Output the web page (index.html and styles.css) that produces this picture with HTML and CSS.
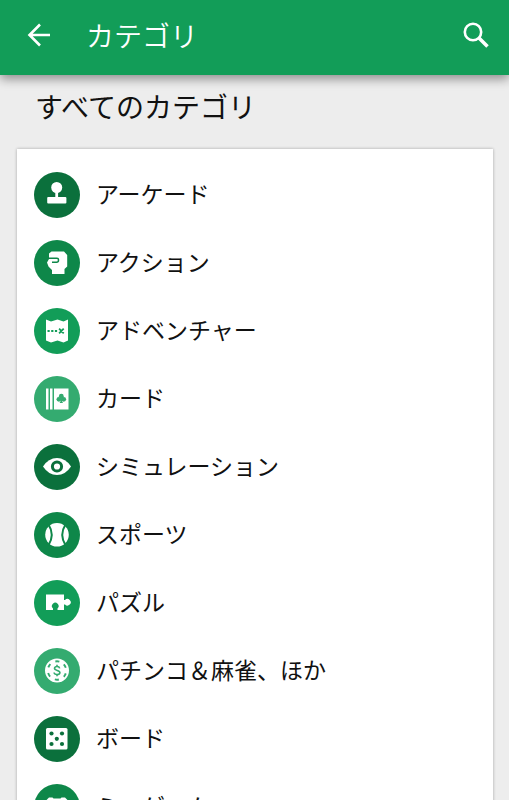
FILE: index.html
```html
<!DOCTYPE html>
<html lang="ja">
<head>
<meta charset="utf-8">
<meta name="viewport" content="width=device-width, initial-scale=1">
<title>カテゴリ</title>
<link rel="stylesheet" href="styles.css">
</head>
<body>
<header class="app-bar">
  <button class="icon-button" type="button" aria-label="戻る">
    <svg viewBox="0 0 34 34"><path d="M28 17H7.500M18 6.500 7.500 17 18 27.500" fill="none" stroke="currentColor" stroke-width="2.600"/></svg>
  </button>
  <h1 class="app-title">カテゴリ</h1>
  <button class="icon-button" type="button" aria-label="検索">
    <svg viewBox="0 0 34 34"><circle cx="14" cy="14" r="8.200" fill="none" stroke="currentColor" stroke-width="2.600"/><path d="m19.500 19.500 9 9" fill="none" stroke="currentColor" stroke-width="3.500"/></svg>
  </button>
</header>
<main class="content">
  <h2 class="section-title">すべてのカテゴリ</h2>
  <ul class="category-list">
    <li><a class="category" href="#arcade">
      <svg class="badge tone-1" viewBox="0 0 46 46"><circle cx="22.700" cy="15.500" r="5.500"/><path d="M21.300 20h2.800v6h-2.800z"/><rect x="13.200" y="25" width="19.200" height="6.500" rx="1"/></svg>
      <span class="label">アーケード</span></a></li>
    <li><a class="category" href="#action">
      <svg class="badge tone-2" viewBox="0 0 46 46"><path d="M17.500 11.500H30l3.200 3.500v11.500L30.500 29v5H18v-4l-3.500-3.500-1.500-4 2-3.500v-5.500z"/><path class="line" d="M15 18.300h8q1.500 0 1.500 1.500v.5q0 2-2 2h-4.500" stroke-width="1.500"/></svg>
      <span class="label">アクション</span></a></li>
    <li><a class="category" href="#adventure">
      <svg class="badge tone-3" viewBox="0 0 46 46"><path d="m12 11.500 5 2 6.500-2 6 2 4.500-2v21l-4.500 2-6-2-6.500 2-5-2z"/><path class="line" d="M13.500 23h2.200m1.500 0h2.200m1.500 0h2.200m2-2.300 4.600 4.600m0-4.600-4.600 4.600" stroke-width="1.800"/></svg>
      <span class="label">アドベンチャー</span></a></li>
    <li><a class="category" href="#card">
      <svg class="badge tone-4" viewBox="0 0 46 46"><path d="M12 12.500h2.500v21H12zM16 12.500h2.500v21H16zM20 12.500h14.500v21H20z"/><g class="cut"><circle cx="27.300" cy="20.200" r="2.400"/><circle cx="24.900" cy="23.300" r="2.400"/><circle cx="29.700" cy="23.300" r="2.400"/><path d="M26.500 21h1.600v4.500l1 1.500h-3.600l1-1.500z"/></g></svg>
      <span class="label">カード</span></a></li>
    <li><a class="category" href="#simulation">
      <svg class="badge tone-1" viewBox="0 0 46 46"><path d="M9 22.500q5.500-8.500 14-8.500t14 8.500Q31.500 31 23 31T9 22.500z"/><circle class="line" cx="23" cy="22.500" r="4.600" stroke-width="3"/></svg>
      <span class="label">シミュレーション</span></a></li>
    <li><a class="category" href="#sports">
      <svg class="badge tone-2" viewBox="0 0 46 46"><circle cx="23" cy="22.800" r="11.800"/><path class="line" d="M14.500 12.500q6.500 10.300 0 20.600M31.500 12.500q-6.500 10.300 0 20.600" stroke-width="2"/></svg>
      <span class="label">スポーツ</span></a></li>
    <li><a class="category" href="#puzzle">
      <svg class="badge tone-3" viewBox="0 0 46 46"><path d="M12 14.500h18v5.500h1a3.300 3.300 0 1 1 0 4.500h-1V30h-6.500v-1.500a3.300 3.300 0 1 0-4.500 0V30h-7z"/></svg>
      <span class="label">パズル</span></a></li>
    <li><a class="category" href="#casino">
      <svg class="badge tone-4" viewBox="0 0 46 46"><circle cx="23" cy="22.500" r="12"/><circle class="line" cx="23" cy="22.500" r="9.200" stroke-width="1.900" stroke-dasharray="4 5.634" stroke-dashoffset="-2.817" transform="rotate(-30 23 22.500) rotate(-30 23 22.500)"/><path class="line" d="M25.700 20.300q-.4-1.800-2.700-1.800t-2.500 1.800c0 2.700 5.400 1.600 5.400 4.300q-.2 1.900-2.900 1.900t-2.900-2M23 16.700v1.800m0 8v1.800" stroke-width="1.600"/></svg>
      <span class="label">パチンコ＆麻雀、ほか</span></a></li>
    <li><a class="category" href="#board">
      <svg class="badge tone-1" viewBox="0 0 46 46"><rect x="12" y="12" width="21.500" height="21.500" rx="1.500"/><g class="cut"><circle cx="17.500" cy="17.500" r="2.100"/><circle cx="28" cy="17.500" r="2.100"/><circle cx="22.800" cy="22.800" r="2.100"/><circle cx="17.500" cy="28" r="2.100"/><circle cx="28" cy="28" r="2.100"/></g></svg>
      <span class="label">ボード</span></a></li>
    <li><a class="category" href="#mini-games">
      <svg class="badge tone-2" viewBox="0 0 46 46"><path d="M15 13.500h3.500l1 1h7l1-1H31l2.500 2.500v14H12.500V16z"/></svg>
      <span class="label">ミニゲーム</span></a></li>
  </ul>
</main>
</body>
</html>
```
FILE: styles.css
```css
* { box-sizing: border-box; }

html, body { height: 100%; }

body {
  margin: 0;
  display: flex;
  flex-direction: column;
  overflow: hidden;
  background: #ededed;
  color: #111;
  font-family: "Noto Sans CJK JP", sans-serif;
}

.app-bar {
  position: relative;
  z-index: 1;
  flex: none;
  display: flex;
  align-items: center;
  padding: 16px 16px 21px 22px;
  background: #129d58;
  color: #fff;
  box-shadow: 0 4px 10px rgba(0, 0, 0, 0.4);
}

.icon-button {
  display: block;
  width: 34px;
  height: 34px;
  padding: 0;
  border: 0;
  background: none;
  color: inherit;
}

.icon-button svg { display: block; }

.app-title {
  flex: 1;
  margin: 0 0 0 30px;
  font-size: 28px;
  font-weight: 350;
  line-height: 38px;
}

.content {
  flex: 1;
  min-height: 0;
  overflow: hidden;
  padding: 0 16px 0 17px;
}

.section-title {
  margin: 0;
  padding: 11px 18px 23px;
  font-size: 28px;
  font-weight: 400;
  line-height: 40px;
}

.category-list {
  margin: 0;
  padding: 12px 0;
  list-style: none;
  background: #fff;
  box-shadow: 0 0 3px rgba(0, 0, 0, 0.3);
}

.category {
  display: flex;
  align-items: center;
  gap: 16px;
  height: 68px;
  padding: 0 17px;
  color: inherit;
  font-size: 23px;
  line-height: 34px;
  text-decoration: none;
}

.label { padding-bottom: 4px; }

.badge {
  flex: none;
  width: 46px;
  height: 46px;
  border-radius: 50%;
  background: var(--tone);
  fill: #fff;
}

.badge .cut { fill: var(--tone); }
.badge .line { fill: none; stroke: var(--tone); }

.tone-1 { --tone: #0b703c; }
.tone-2 { --tone: #0e8749; }
.tone-3 { --tone: #129d58; }
.tone-4 { --tone: #34ab70; }
```
